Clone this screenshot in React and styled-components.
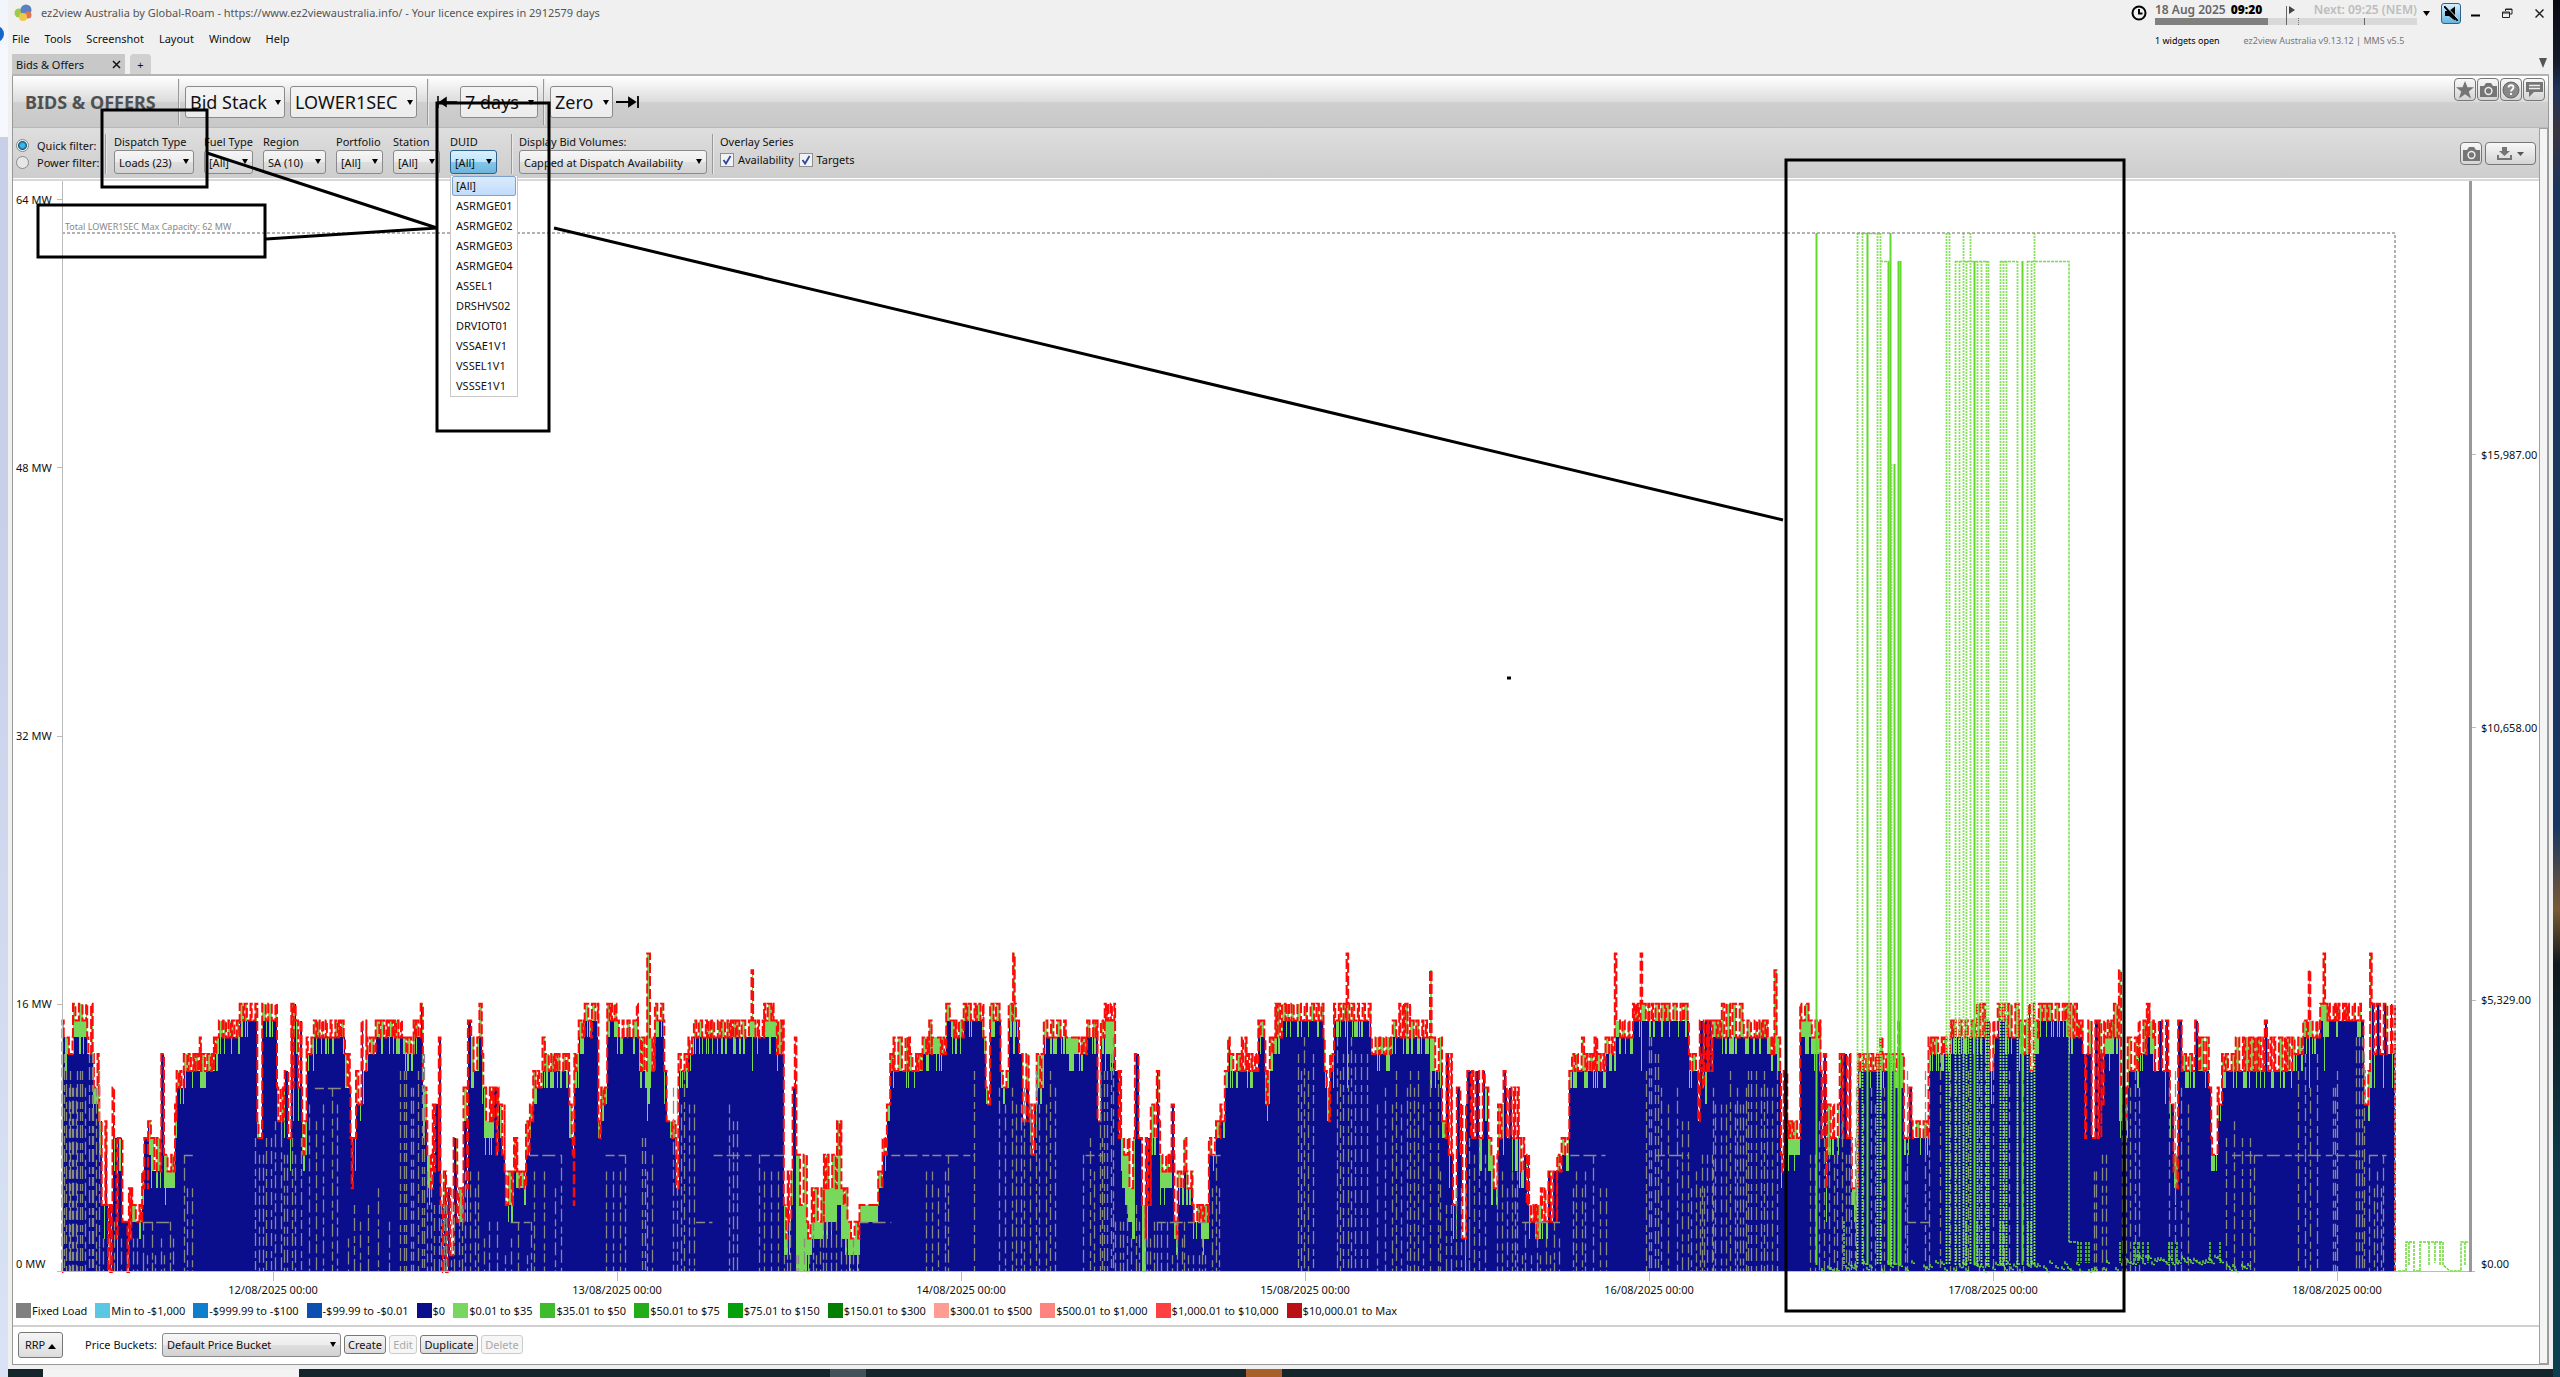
import React from "react";
import styled, { createGlobalStyle, css } from "styled-components";

const GlobalStyle = createGlobalStyle`
  * { box-sizing: border-box; }
  body { margin: 0; font-family: "Noto Sans", "Open Sans", sans-serif; font-size: 11px; color: #111; }
  button, select, input { font-family: inherit; font-size: inherit; color: inherit; margin: 0; }
`;

/* ---------- chart data ---------- */

const PLOT_W = 2409;
const PLOT_H = 1091;
const MW = 16.76;
const PX_PER_UNIT = 0.5485;
const yOf = (mw) => PLOT_H - mw * MW;

// Each run: [start, high MW, low MW, optional $0 level]
const blocks = [
  {
    from: 0,
    runs: [
      [115, 15, 14], [120, 14, 13], [134, 16, 15, 14], [160, 14, 13], [167, 16, 14], [170, 13, 11, 10], [182, 9, 4], [196, 4, 0],
      [206, 11, 8], [209, 8, 2], [222, 8, 3], [229, 3, 0], [236, 5, 2], [242, 4, 3], [260, 6, 5], [264, 8, 5], [271, 9, 6], [276, 8, 6],
      [295, 13, 6], [300, 7, 6, 5], [320, 10, 9], [323, 12, 11], [336, 13, 12], [365, 14, 12], [368, 13, 12], [391, 14, 13], [400, 15, 14],
      [438, 16, 15], [470, 9, 8], [479, 16, 15], [506, 11, 9], [520, 12, 8], [532, 16, 11], [540, 15, 11], [552, 9, 7], [560, 14, 13],
      [573, 15, 14], [630, 13, 11], [640, 8, 5], [650, 12, 10], [660, 15, 12], [669, 14, 13], [686, 15, 14], [735, 14, 13], [755, 15, 14],
      [768, 16, 13], [772, 11, 9], [780, 7, 5], [790, 10, 6], [801, 14, 4], [804, 4, 0], [810, 6, 0], [817, 5, 1], [828, 8, 3], [838, 5, 3],
      [846, 11, 5], [854, 15, 11], [860, 14, 12], [875, 16, 14], [880, 13, 11], [883, 11, 9, 8], [902, 11, 7], [910, 10, 7], [921, 6, 4],
      [938, 8, 6], [944, 6, 5], [960, 9, 7], [967, 10, 9], [973, 12, 11], [990, 14, 12], [995, 13, 12], [1039, 10, 8], [1045, 7, 4],
      [1048, 13, 12], [1056, 15, 14], [1067, 16, 15], [1074, 15, 14], [1080, 16, 15], [1092, 9, 8], [1097, 11, 10], [1108, 16, 15],
      [1125, 15, 14], [1162, 16, 14], [1165, 14, 12], [1181, 19, 19, 10], [1186, 14, 12], [1195, 16, 15], [1212, 12, 9], [1222, 9, 8],
      [1234, 5, 5], [1238, 13, 12], [1256, 14, 13], [1266, 15, 14], [1371, 18, 18, 12], [1374, 15, 14], [1394, 16, 15, 14], [1415, 15, 13],
      [1430, 4, 2, 1], [1437, 6, 3], [1446, 11, 6], [1450, 14, 11], [1453, 7, 4, 0], [1472, 3, 2, 1], [1481, 5, 3, 2], [1503, 7, 5, 3],
      [1527, 9, 7, 4], [1535, 5, 4, 2], [1546, 3, 2, 1],
    ],
  },
  {
    from: 1568,
    runs: [
      [0, 4, 4, 3], [34, 6, 5], [42, 8, 7], [50, 10, 9], [56, 13, 12], [62, 14, 12], [92, 13, 12], [115, 14, 13], [127, 15, 13],
      [132, 14, 14, 13], [146, 14, 13], [158, 16, 15], [166, 15, 14], [190, 16, 15], [226, 14, 13], [230, 11, 10], [238, 16, 15],
      [257, 12, 11], [272, 16, 15], [280, 19, 19, 13], [283, 16, 15], [291, 13, 9], [310, 10, 7], [323, 13, 11], [336, 15, 14],
      [376, 14, 14, 13], [398, 14, 13], [415, 15, 14], [434, 9, 9], [440, 15, 14], [447, 16, 15, 13], [466, 12, 8], [478, 8, 7, 5],
      [490, 8, 5, 3], [502, 13, 8], [515, 4, 2, 0], [522, 8, 4], [531, 10, 8], [542, 12, 9], [548, 7, 6, 5], [569, 10, 7], [574, 3, 2],
      [580, 6, 5], [592, 8, 6], [596, 6, 5], [607, 4, 3], [622, 4, 3, 2], [637, 8, 7], [650, 9, 8], [658, 10, 9], [666, 12, 11],
      [672, 14, 8], [675, 13, 12], [697, 14, 12], [708, 13, 12], [727, 15, 14], [740, 12, 10], [748, 14, 13], [758, 16, 14], [770, 16, 15],
      [846, 14, 12], [852, 11, 9], [858, 13, 12], [865, 16, 15], [888, 19, 19, 11], [891, 16, 15], [932, 14, 13], [972, 15, 14],
      [984, 16, 14], [1004, 15, 14], [1040, 18, 18, 11], [1043, 14, 12], [1062, 9, 8], [1070, 13, 7], [1080, 7, 4], [1089, 11, 7],
      [1097, 10, 2], [1108, 12, 8], [1140, 11, 8], [1152, 7, 5], [1164, 10, 8], [1174, 12, 9], [1178, 11, 8], [1202, 8, 6], [1212, 7, 4],
      [1222, 4, 3], [1232, 4, 2], [1242, 5, 3], [1256, 6, 3], [1272, 7, 6], [1280, 8, 7], [1294, 12, 11], [1299, 13, 12], [1317, 14, 12],
      [1321, 13, 12], [1340, 14, 12], [1345, 13, 12], [1360, 14, 13], [1377, 19, 19, 12], [1380, 15, 14], [1410, 16, 15],
      [1424, 19, 19, 12], [1427, 16, 15], [1512, 13, 12], [1529, 9, 9], [1532, 15, 12], [1548, 14, 13], [1556, 16, 14],
    ],
  },
  {
    from: 3100,
    runs: [
      [3, 12, 11], [8, 15, 12], [24, 15, 14], [40, 16, 14], [78, 15, 14], [124, 14, 13], [136, 18, 18, 13], [140, 14, 12], [148, 7, 6],
      [153, 12, 8], [160, 9, 8, 7], [183, 16, 15, 14], [202, 15, 14, 13], [220, 12, 8], [226, 13, 5], [232, 10, 8], [255, 13, 8],
      [277, 5, 5, 4], [288, 13, 12], [329, 14, 12], [333, 13, 12], [362, 15, 13], [366, 13, 8], [372, 8, 8], [382, 11, 8], [386, 9, 8],
      [417, 14, 13], [458, 15, 14], [505, 16, 14], [522, 15, 12], [535, 15, 14], [543, 16, 15], [556, 15, 14], [562, 16, 14],
      [582, 15, 13], [600, 16, 12], [610, 15, 14], [618, 16, 15], [668, 16, 14], [690, 15, 14], [698, 13, 8], [708, 15, 8],
      [732, 13, 10], [737, 15, 14, 13], [755, 16, 14], [764, 18, 18, 9], [768, 11, 9], [780, 14, 12], [800, 15, 13], [815, 16, 14],
      [820, 15, 14, 13], [828, 15, 12], [857, 10, 6], [864, 7, 5], [872, 15, 12], [880, 13, 12], [903, 15, 12], [908, 14, 12],
      [928, 11, 8], [934, 7, 7], [944, 11, 10], [952, 13, 12], [977, 14, 12], [1030, 15, 12], [1034, 14, 12], [1080, 14, 13],
      [1100, 15, 14], [1110, 18, 18, 11], [1113, 15, 14], [1131, 16, 15], [1137, 19, 19, 12], [1140, 16, 15], [1210, 12, 10],
      [1222, 19, 19, 12], [1225, 16, 13], [1267, 0, 0],
    ],
  },
];

// Target series: [start, end, spacing, level MW]
const targetRanges = [
  [118, 182, 4, 13], [182, 262, 9, 3], [262, 318, 7, 3], [336, 356, 6, 7], [465, 560, 7, 9], [565, 632, 13, 11], [636, 662, 7, 4],
  [672, 720, 15, 5], [730, 776, 6, 13], [780, 880, 6, 6], [884, 975, 12, 3], [975, 1030, 13, 7], [1105, 1142, 10, 7], [1172, 1190, 6, 8],
  [1228, 1272, 6, 12], [1330, 1345, 9, 11], [1385, 1430, 9, 7], [1430, 1570, 7, 3], [1690, 1732, 8, 7], [1776, 1778, 3, 13],
  [1822, 1930, 9, 12], [1975, 2012, 9, 8], [2006, 2034, 5, 14], [2034, 2110, 6, 4], [2110, 2200, 7, 3], [2210, 2235, 8, 7],
  [2368, 2398, 6, 14], [2438, 2500, 7, 14], [2512, 2626, 9, 12], [2626, 2680, 7, 6], [2680, 2716, 9, 8], [2730, 2776, 6, 7],
  [2776, 2850, 7, 3], [2868, 2930, 10, 7], [3002, 3024, 5, 14], [3030, 3084, 11, 11], [3084, 3124, 6, 7], [3124, 3245, 6, 12],
  [3300, 3385, 6, 9], [3385, 3480, 10, 12], [3474, 3478, 3, 7], [3510, 3700, 13, 14], [3818, 3842, 7, 7], [3870, 3902, 7, 12],
  [3955, 3995, 9, 12], [4060, 4112, 11, 9], [4190, 4235, 11, 13], [4254, 4262, 3, 12], [4296, 4316, 5, 14], [4320, 4350, 6, 7],
];

// Flat stretches of the target series: [start, end, level MW]
const targetFlats = [
  [262, 310, 3], [336, 356, 7], [932, 968, 3], [966, 1024, 7], [1105, 1140, 7], [1270, 1300, 3], [1302, 1376, 7], [1388, 1430, 7],
  [1568, 1626, 3], [1626, 1778, 7], [1980, 2012, 7], [2110, 2200, 3], [2210, 2232, 7], [2776, 2850, 3], [2864, 2928, 7], [3020, 3080, 7],
  [3478, 3518, 3], [4070, 4108, 7], [4110, 4300, 7], [4320, 4352, 7], [575, 628, 11],
];

// Regional price spikes: [x, y of top, solid]
const priceSpikes = [
  [1754, 52, 1], [1795, 52, 0], [1800, 52, 0], [1805, 52, 1], [1815, 52, 0], [1818, 52, 0], [1826, 80, 1], [1828, 52, 1], [1829, 283, 0],
  [1832, 283, 1], [1836, 80, 1], [1838, 80, 1], [1884, 52, 0], [1887, 52, 0], [1893, 80, 0], [1897, 80, 0], [1904, 80, 0], [1901, 52, 0],
  [1908, 52, 0], [1912, 80, 1], [1915, 80, 0], [1919, 80, 0], [1924, 80, 0], [1926, 80, 0], [1938, 80, 0], [1941, 80, 0], [1944, 80, 0],
  [1955, 80, 0], [1960, 80, 1], [1965, 80, 0], [1969, 80, 0], [1972, 52, 0],
];

function makeRandom(seed) {
  let s = seed;
  return () => {
    s = (s * 1664525 + 1013904223) % 4294967296;
    return s / 4294967296;
  };
}

function buildSeries() {
  const rnd = makeRandom(2025);
  const runs = blocks.flatMap((b) => b.runs.map((r) => [r[0] + b.from, r[1], r[2], r[3]]));
  let avail = `M0 ${PLOT_H}`;
  let green = `M0 ${PLOT_H}`;
  let blue = `M0 ${PLOT_H}`;
  for (let i = 0; i < runs.length - 1; i += 1) {
    const [start, hi, lo, zero] = runs[i];
    const end = runs[i + 1][0];
    let high = true;
    let hold = 0;
    for (let u = start; u < end; u += 2.18) {
      if (hold <= 0) {
        high = u === start ? true : !high;
        hold = 1 + Math.floor(rnd() * 3);
      }
      hold -= 1;
      const x = ((u - 114) * PX_PER_UNIT).toFixed(1);
      const level = high ? hi : lo;
      const stripe = rnd() < 0.32 ? 1 : 0;
      let base;
      if (zero !== undefined) base = zero - (rnd() < 0.25 ? 1 : 0);
      else if (hi - lo <= 2) base = lo - stripe;
      else base = level - stripe * 2;
      avail += `H${x}V${yOf(level).toFixed(1)}`;
      green += `H${x}V${yOf(level).toFixed(1)}`;
      blue += `H${x}V${yOf(Math.max(0, Math.min(base, level))).toFixed(1)}`;
    }
  }
  const endX = 2333;
  const close = `H${endX}V${PLOT_H}Z`;
  return { avail: `${avail}H${endX}V${PLOT_H}`, green: green + close, blue: blue + close };
}

function buildTargets() {
  const rnd = makeRandom(77);
  let d = "";
  targetRanges.forEach(([a, b, gap, level]) => {
    for (let u = a; u < b; u += gap * (0.6 + rnd())) {
      const x = Math.round((u - 114) * PX_PER_UNIT) + 0.5;
      const top = level - Math.floor(rnd() * 3);
      d += `M${x} ${yOf(Math.max(1, top))}V${PLOT_H}`;
    }
  });
  targetFlats.forEach(([a, b, level]) => {
    d += `M${((a - 114) * PX_PER_UNIT).toFixed(1)} ${Math.round(yOf(level)) + 0.5}H${((b - 114) * PX_PER_UNIT).toFixed(1)}`;
  });
  return d;
}

function buildLowPrice() {
  const rnd = makeRandom(9);
  let d = "M2007 1061H2016";
  for (let x = 1760; x < 2188; x += 3) {
    const dense = x > 2060 && x < 2160;
    if (dense || rnd() < 0.6) {
      const h = dense ? 10 + rnd() * 8 : 3 + rnd() * 9;
      d += `M${x} ${(PLOT_H - h).toFixed(1)}v3h3`;
    }
  }
  [2016, 2019, 2024, 2027, 2058, 2072, 2076, 2081, 2086, 2107, 2110, 2115, 2148, 2158].forEach((x) => {
    d += `M${x} 1061V1082`;
  });
  [1782, 1904, 1915, 1938, 1941, 1966, 1969].forEach((x) => {
    d += `M${x} 1040V1085`;
  });
  d += "M2336 1090H2344V1061H2352V1090H2358V1061H2381V1084L2388 1090H2399V1061H2407";
  d += "M2347 1061V1084M2367 1061V1084M2373 1061V1082M2378 1061V1084M2403 1061V1084";
  return d;
}

const series = buildSeries();
const targets = buildTargets();
const lowPrice = buildLowPrice();

/* ---------- layout ---------- */

const Screen = styled.div`
  display: grid;
  grid-template-columns: 8px minmax(0, 1fr) 7px;
  grid-template-rows: minmax(0, 1fr) 8px;
  grid-template-areas: "left window right" "left taskbar right";
  height: 100vh;
  overflow: hidden;
  position: relative;
  background: #16242b;
`;

const LeftDesktop = styled.div`
  grid-area: left;
  background: linear-gradient(#f2f5fb 0 45px, #f6f8fd 45px 137px, #c8d0e8 137px 500px, #d9e3f5);
  overflow: hidden;
`;

const BlueDot = styled.div`
  width: 16px;
  height: 16px;
  margin: 26px 0 0 -12px;
  border-radius: 50%;
  background: #1467c4;
`;

const RightDesktop = styled.div`
  grid-area: right;
  background: linear-gradient(#0a0c12, #141a28 60px, #22345a 90px, #3b3440 130px, #1b355e 190px, #173663 60%, #7b5a36 66%, #10181c 70%, #0d3c4a 85%, #0d4150);
`;

const Taskbar = styled.div`
  grid-area: taskbar;
  display: flex;
  background: #15252c;
`;

const TaskSlot = styled.div`
  width: ${(p) => p.$w}px;
  background: ${(p) => p.$color};
`;

const Window = styled.main`
  grid-area: window;
  display: flex;
  flex-direction: column;
  background: #f0f0f0;
  min-width: 0;
  min-height: 0;
  padding: 0 4px 4px 4px;
`;

const Header = styled.header`
  display: flex;
  justify-content: space-between;
  height: 52px;
`;

const HeaderLeft = styled.div`
  display: flex;
  flex-direction: column;
`;

const TitleLine = styled.div`
  display: flex;
  align-items: center;
  gap: 8px;
  height: 26px;
  padding-left: 2px;
  color: #555;
`;

const MenuBar = styled.nav`
  display: flex;
  align-items: center;
  gap: 15px;
  height: 28px;
`;

const MenuButton = styled.button`
  border: 0;
  padding: 0;
  background: none;
`;

const HeaderRight = styled.div`
  display: flex;
`;

const ClockBlock = styled.div`
  display: grid;
  grid-template-columns: 18px 262px 18px;
  column-gap: 6px;
  grid-template-rows: 26px 28px;
  align-items: center;
`;

const ClockLine = styled.div`
  display: flex;
  flex-direction: column;
`;

const ClockText = styled.div`
  display: flex;
  justify-content: space-between;
  align-items: flex-end;
  height: 17px;
  line-height: 16px;
  font-size: 12px;
  font-weight: 600;
  color: #666;
  b { color: #000; margin-left: 2px; }
`;

const NextText = styled.span`
  color: #bdbdbd;
`;

const VersionLine = styled.div`
  grid-column: 2;
  display: flex;
  gap: 24px;
  font-size: 9px;
  color: #777;
  white-space: nowrap;
  span:first-child { color: #000; }
`;

const WindowButtons = styled.div`
  display: flex;
  align-items: center;
  height: 26px;
  gap: 9px;
  margin-right: -2px;
`;

const MuteButton = styled.button`
  display: flex;
  width: 20px;
  height: 21px;
  margin-right: -6px;
  padding: 2px;
  border: 1px solid #2c628b;
  border-radius: 3px;
  background: linear-gradient(#d5effc, #69b5e0);
`;

const PlainButton = styled.button`
  display: flex;
  align-items: center;
  justify-content: center;
  width: 23px;
  height: 20px;
  border: 0;
  padding: 0;
  background: none;
`;

const TabStrip = styled.div`
  display: flex;
  align-items: flex-end;
  height: 24px;
  gap: 5px;
  padding-right: 2px;
  border-bottom: 2px solid #b4b4b4;
`;

const Tab = styled.div`
  display: flex;
  align-items: center;
  justify-content: space-between;
  width: 113px;
  height: 20px;
  padding: 0 4px;
  background: #c8c8c8;
`;

const AddTab = styled.button`
  width: 21px;
  height: 20px;
  border: 0;
  padding: 0;
  background: #d0d0d0;
  border-radius: 4px 4px 0 0;
`;

const TabList = styled.div`
  margin-left: auto;
  align-self: center;
  display: flex;
`;

const Panel = styled.section`
  flex: 1;
  min-height: 0;
  display: flex;
  flex-direction: column;
  border: 1px solid #999;
  border-top: 0;
  background: #fff;
`;

const Toolbar = styled.div`
  display: flex;
  align-items: center;
  height: 52px;
  padding-left: 12px;
  background: linear-gradient(#fff, #dcdcdc 50%, #cfcfcf 52%, #c8c8c8);
  border-bottom: 1px solid #b8b8b8;
`;

const Heading = styled.h1`
  margin: 0;
  width: 153px;
  font-size: 18px;
  font-weight: 700;
  line-height: 24px;
  color: #505050;
  white-space: nowrap;
`;

const Separator = styled.div`
  width: 2px;
  height: ${(p) => p.$h}px;
  background: #999;
  border-right: 1px solid #e8e8e8;
`;

const ToolGroup = styled.div`
  display: flex;
  align-items: center;
  gap: ${(p) => p.$gap || 5}px;
  padding: 0 ${(p) => p.$right || 10}px 0 ${(p) => p.$left || 5}px;
`;

const IconRow = styled.div`
  display: flex;
  gap: 1px;
  margin: 0 3px 24px auto;
`;

const IconButton = styled.button`
  display: flex;
  align-items: center;
  justify-content: center;
  gap: 5px;
  width: ${(p) => p.$w || 22}px;
  height: 23px;
  padding: 0;
  border: 1px solid #777;
  border-radius: 4px;
  background: linear-gradient(#f8f8f8, #d4d4d4);
  color: #757575;
`;

const SelectShell = styled.div`
  position: relative;
  width: ${(p) => p.$w}px;
  height: ${(p) => (p.$large ? 32 : 24)}px;
  &::after {
    content: "";
    position: absolute;
    right: ${(p) => (p.$large ? 4 : 5)}px;
    top: ${(p) => (p.$large ? 14 : 9)}px;
    border: 3px solid transparent;
    border-top: 5px solid #000;
    border-bottom: 0;
    pointer-events: none;
  }
`;

const NativeSelect = styled.select`
  appearance: none;
  width: 100%;
  height: 100%;
  padding: 0 4px;
  border: 1px solid #8a8a8a;
  border-radius: 3px;
  background: linear-gradient(#f6f6f6, #ececec 50%, #dedede 52%, #d2d2d2);
  font-size: ${(p) => (p.$large ? 18 : 11)}px;
  ${(p) => p.$large && css`background: linear-gradient(#f4f4f4, #ececec);`}
  ${(p) => p.$active && css`
    border-color: #2c628b;
    background: linear-gradient(#d9f0fc, #bee6fd 50%, #85c6ea 52%, #6db5dd);
  `}
`;

const Filters = styled.div`
  display: flex;
  align-items: flex-start;
  height: 50px;
  padding: 6px 10px 0 3px;
  background: linear-gradient(#dedede, #cdcdcd);
`;

const ScrollBody = styled.div`
  flex: 1;
  min-height: 0;
  display: flex;
`;

const Content = styled.div`
  flex: 1;
  min-width: 0;
  display: flex;
  flex-direction: column;
`;

const ScrollTrack = styled.div`
  width: 9px;
  border: 1px solid #a0a0a0;
  background: #f4f4f4;
`;

const RadioList = styled.div`
  display: flex;
  flex-direction: column;
  gap: 1px;
  width: 89px;
  padding-top: 3px;
`;

const RadioLabel = styled.label`
  display: flex;
  align-items: center;
  gap: 8px;
  height: 16px;
  white-space: nowrap;
  input {
    appearance: none;
    width: 13px;
    height: 13px;
    border: 1px solid #8a8a8a;
    border-radius: 50%;
    background: #e6e6e6;
  }
  input:checked { background: radial-gradient(#3fb5e8 0 2px, #125a86 4px, #f0f0f0 5px); }
`;

const Field = styled.div`
  position: relative;
  display: flex;
  flex-direction: column;
  width: ${(p) => p.$w}px;
  label { height: 16px; line-height: 16px; white-space: nowrap; }
`;

const FilterGroup = styled.div`
  display: flex;
  gap: 10px;
  padding: 0 ${(p) => p.$right || 5}px 0 ${(p) => p.$left || 6}px;
`;

const DropMenu = styled.ul`
  position: absolute;
  z-index: 3;
  top: 41px;
  left: 0;
  width: 68px;
  margin: 0;
  padding: 0 1px;
  list-style: none;
  border: 1px solid #c8c8c8;
  background: #fff;
`;

const DropItem = styled.li`
  height: 20px;
  line-height: 18px;
  padding: 0 3px;
  border: 1px solid ${(p) => (p.$selected ? "#7da2ce" : "transparent")};
  border-radius: 2px;
  background: ${(p) => (p.$selected ? "linear-gradient(#dcebfd, #c1dbfc)" : "none")};
`;

const CheckLine = styled.div`
  display: flex;
  align-items: center;
  gap: 5px;
  height: 22px;
  label { display: flex; align-items: center; gap: 4px; }
`;

const CheckShell = styled.span`
  display: inline-grid;
  width: 14px;
  height: 14px;
  input, svg { grid-area: 1 / 1; }
  input {
    appearance: none;
    width: 14px;
    height: 14px;
    border: 1px solid #8e8f8f;
    background: #f0f2f4;
  }
  svg { pointer-events: none; z-index: 1; }
`;

const ChartTools = styled.div`
  display: flex;
  gap: 3px;
  margin: 8px -7px 0 auto;
`;

const ChartGrid = styled.div`
  flex: 1;
  min-height: 0;
  display: grid;
  grid-template-columns: 49px minmax(0, 1fr) 68px;
  grid-template-rows: minmax(0, 1fr);
  margin-top: 1px;
  border-top: 2px solid #d8d8d8;
`;

const Axis = styled.div`
  display: grid;
  grid-template-rows: ${(p) => p.$rows};
  padding-left: ${(p) => p.$pad}px;
  white-space: nowrap;
  span { align-self: end; line-height: 16px; margin-bottom: -9px; }
  span:last-child { margin-bottom: 0; }
`;

const Plot = styled.svg`
  display: block;
  width: 100%;
  height: 100%;
  min-height: 0;
  overflow: visible;
`;

const CapacityLabel = styled.text`
  font-size: 9px;
  fill: #888;
`;

const DateAxis = styled.div`
  display: grid;
  grid-template-columns: 40fr repeat(7, 344fr);
  height: 29px;
  margin: 0 30px 0 48px;
  text-align: center;
  span:first-child { grid-column: 2; }
  span { padding-top: 10px; line-height: 16px; }
`;

const Legend = styled.div`
  display: flex;
  align-items: center;
  gap: 8px;
  height: 26px;
  padding: 0 0 5px 3px;
  border-bottom: 2px solid #d0d0d0;
  white-space: nowrap;
`;

const LegendItem = styled.span`
  display: flex;
  align-items: center;
  gap: 1px;
`;

const Swatch = styled.i`
  width: 15px;
  height: 15px;
  background: ${(p) => p.$color};
`;

const Footer = styled.footer`
  display: flex;
  align-items: center;
  gap: 3px;
  height: 37px;
  padding: 0 0 2px 5px;
`;

const Button = styled.button`
  width: ${(p) => p.$w}px;
  height: ${(p) => p.$h || 19}px;
  margin-right: ${(p) => p.$after || 0}px;
  padding: 0;
  border: 1px solid #777;
  border-radius: 3px;
  background: linear-gradient(#f5f5f5, #dcdcdc);
  white-space: nowrap;
  &:disabled { color: #aaa; border-color: #ccc; background: #f6f6f6; }
`;

const FooterLabel = styled.label`
  width: 74px;
  white-space: nowrap;
`;

const Markup = styled.svg`
  position: absolute;
  inset: 0;
  width: 100%;
  height: 100%;
  z-index: 5;
  pointer-events: none;
`;

/* ---------- parts ---------- */

function Choice({ id, value, w, large, active, label }) {
  return (
    <SelectShell $w={w} $large={large}>
      <NativeSelect id={id} aria-label={label} $large={large} $active={active} defaultValue={value}>
        <option>{value}</option>
      </NativeSelect>
    </SelectShell>
  );
}

function FilterField({ label, value, w, active, children }) {
  const id = label.toLowerCase().replace(/[^a-z]+/g, "-");
  return (
    <Field $w={w}>
      <label htmlFor={id}>{label}</label>
      <Choice id={id} value={value} w={w} active={active} />
      {children}
    </Field>
  );
}

function CameraIcon() {
  return (
    <svg width="17" height="14" viewBox="0 0 17 14">
      <path d="M0 3h4l2-3h5l2 3h4v11H0z" fill="#757575" />
      <circle cx="8.500" cy="8" r="3.400" fill="none" stroke="#eee" strokeWidth="1.500" />
    </svg>
  );
}

function CheckBox({ label }) {
  return (
    <label>
      <CheckShell>
        <input type="checkbox" defaultChecked />
        <svg viewBox="0 0 14 14"><path d="M3.500 7l2.500 3.500L10.500 3" fill="none" stroke="#31479b" strokeWidth="1.800" /></svg>
      </CheckShell>
      {label}
    </label>
  );
}

const duids = ["[All]", "ASRMGE01", "ASRMGE02", "ASRMGE03", "ASRMGE04", "ASSEL1", "DRSHVS02", "DRVIOT01", "VSSAE1V1", "VSSEL1V1", "VSSSE1V1"];

const legend = [
  ["Fixed Load", "#808080"], ["Min to -$1,000", "#5bc8e3"], ["-$999.99 to -$100", "#0f7fcd"], ["-$99.99 to -$0.01", "#0d4fb0"],
  ["$0", "#0a0e8c"], ["$0.01 to $35", "#78d760"], ["$35.01 to $50", "#3fbb2e"], ["$50.01 to $75", "#22ad1a"], ["$75.01 to $150", "#06a00a"],
  ["$150.01 to $300", "#038003"], ["$300.01 to $500", "#ff9c94"], ["$500.01 to $1,000", "#ff8480"], ["$1,000.01 to $10,000", "#ff4040"],
  ["$10,000.01 to Max", "#bb1014"],
];

const dates = ["12", "13", "14", "15", "16", "17", "18"];

function Chart() {
  return (
    <Plot viewBox={`0 0 ${PLOT_W} ${PLOT_H}`} preserveAspectRatio="none">
      <path d={series.green} fill="#78d85c" shapeRendering="crispEdges" />
      <path d={series.blue} fill="#0a0e8c" shapeRendering="crispEdges" />
      <path d={series.avail} fill="none" stroke="#ff0a0a" strokeWidth="2" strokeDasharray="10 3" />
      <path d={targets} fill="none" stroke="#8a8a84" strokeWidth="1.300" strokeDasharray="9 4 13 5 7 3" />
      <path d={lowPrice} fill="none" stroke="#69d936" strokeWidth="1.500" strokeDasharray="3 1" />
      {priceSpikes.map(([x, top, solid]) => (
        <path
          key={x}
          d={`M${x + 0.5} ${top}V1084`}
          stroke={solid ? "#62d82c" : "#86e25a"}
          strokeWidth={solid ? 2 : 1.8}
          strokeDasharray={solid ? "none" : "2 1"}
        />
      ))}
      <path d="M1795 52.500H1818M1818 80.500H1827M1893 80.500H1926M1938 80.500H1955M1965 80.500H2007V1061" fill="none" stroke="#7ddc4e" strokeWidth="1.500" strokeDasharray="3 1" />
      <path d="M0 52H2333V1091" fill="none" stroke="#999" strokeWidth="1.500" strokeDasharray="3 2" />
      <path d="M0.500 0V1091M-5 18.500H0M-5 286.500H0M-5 555.500H0M-5 823.500H0M-5 1090.500H2413M2409 273.500h5M2409 546.500h5M2409 819.500h5" stroke="#bbb" fill="none" />
      <path d="M211.500 1091v9M555.500 1091v9M899.500 1091v9M1243.500 1091v9M1587.500 1091v9M1931.500 1091v9M2275.500 1091v9" stroke="#bbb" fill="none" />
      <path d="M2408.500 0V1091" stroke="#999" strokeWidth="3" />
      <CapacityLabel x="3" y="49">Total LOWER1SEC Max Capacity: 62 MW</CapacityLabel>
    </Plot>
  );
}

export default function App() {
  return (
    <Screen>
      <GlobalStyle />
      <LeftDesktop><BlueDot /></LeftDesktop>
      <Window>
        <Header>
          <HeaderLeft>
            <TitleLine>
              <svg width="19" height="18" viewBox="0 0 19 18">
                <circle cx="5" cy="9" r="4.500" fill="#9ccb4c" />
                <circle cx="12" cy="6" r="5.500" fill="#5b80c4" />
                <circle cx="14" cy="11" r="3.500" fill="#e4744f" />
                <circle cx="9" cy="13" r="4" fill="#eec84a" />
              </svg>
              <span>ez2view Australia by Global-Roam - https://www.ez2viewaustralia.info/ - Your licence expires in 2912579 days</span>
            </TitleLine>
            <MenuBar>
              {["File", "Tools", "Screenshot", "Layout", "Window", "Help"].map((m) => <MenuButton key={m}>{m}</MenuButton>)}
            </MenuBar>
          </HeaderLeft>
          <HeaderRight>
            <ClockBlock>
              <svg width="16" height="16" viewBox="0 0 16 16" fill="none" stroke="#000" strokeWidth="2">
                <circle cx="8" cy="8" r="6.500" /><path d="M8 4v4.500h3.500" />
              </svg>
              <ClockLine>
                <ClockText>
                  <span>18 Aug 2025 <b>09:20</b></span>
                  <NextText>Next: 09:25 (NEM)</NextText>
                </ClockText>
                <svg width="262" height="7" viewBox="0 0 262 7" overflow="visible">
                  <path d="M0 0h262v7H0z" fill="#d9d9d9" /><path d="M0 0h113v7H0z" fill="#808080" />
                  <path d="M131.500 -12V7M209.500 0v7" stroke="#666" /><path d="M143.500 0v7" stroke="#777" strokeDasharray="1 1" />
                  <path d="M134 -12l6 4-6 4z" fill="#444" />
                </svg>
              </ClockLine>
              <svg width="7" height="5" viewBox="0 0 7 5"><path d="M0 0h7L3.500 5z" /></svg>
              <VersionLine><span>1 widgets open</span><span>ez2view Australia v9.13.12 | MMS v5.5</span></VersionLine>
            </ClockBlock>
            <WindowButtons>
              <MuteButton aria-label="Mute">
                <svg width="14" height="15" viewBox="0 0 14 15"><path d="M1 5h4l6-4.500v14L5 10H1z" /><path d="M0 0l14 15" stroke="#000" strokeWidth="2" /><path d="M1 -1l14 15" stroke="#bfe3f6" /></svg>
              </MuteButton>
              <PlainButton aria-label="Minimise"><svg width="9" height="8"><path d="M0 6.500h9" stroke="#000" strokeWidth="2" /></svg></PlainButton>
              <PlainButton aria-label="Restore">
                <svg width="11" height="10" fill="none" stroke="#222"><path d="M3.500 3V1H10v5H8M.500 4H7.500v5.500H.500zM3 1.500h7M.500 5h7" /></svg>
              </PlainButton>
              <PlainButton aria-label="Close"><svg width="9" height="9"><path d="M.500 .500l8 8M8.500 .500l-8 8" stroke="#222" strokeWidth="1.500" /></svg></PlainButton>
            </WindowButtons>
          </HeaderRight>
        </Header>
        <TabStrip>
          <Tab>
            Bids &amp; Offers
            <MenuButton aria-label="Close tab"><svg width="9" height="9"><path d="M1 1l7 7M8 1L1 8" stroke="#111" strokeWidth="1.500" /></svg></MenuButton>
          </Tab>
          <AddTab>+</AddTab>
          <TabList><svg width="8" height="10"><path d="M0 0h8L4 10z" fill="#555" /></svg></TabList>
        </TabStrip>
        <Panel>
          <Toolbar>
            <Heading>BIDS &amp; OFFERS</Heading>
            <Separator $h={46} />
            <ToolGroup>
              <Choice label="View" value="Bid Stack" w={100} large />
              <Choice label="Market" value="LOWER1SEC" w={127} large />
            </ToolGroup>
            <Separator $h={46} />
            <ToolGroup $left={8} $right={5} $gap={3}>
              <svg width="20" height="12"><path d="M1 0v12M2 6h18M3 6l6-4v8z" stroke="#000" strokeWidth="1.500" /></svg>
              <Choice label="Range" value="7 days" w={78} large />
            </ToolGroup>
            <Separator $h={46} />
            <ToolGroup $gap={3}>
              <Choice label="Offset" value="Zero" w={63} large />
              <svg width="23" height="14"><path d="M22 1v12M0 7h18M19 7l-6-4v8z" stroke="#000" strokeWidth="1.800" /></svg>
            </ToolGroup>
            <IconRow>
              <IconButton aria-label="Favourite"><svg width="18" height="18" viewBox="0 0 18 18"><path d="M9 0l2.500 6.300H18l-5.200 4.200L15 17.500l-6-4.200-6 4.200 2.200-7L0 6.300h6.500z" fill="#757575" /></svg></IconButton>
              <IconButton aria-label="Snapshot"><CameraIcon /></IconButton>
              <IconButton aria-label="Help">
                <svg width="18" height="18" viewBox="0 0 18 18"><circle cx="9" cy="9" r="8" fill="#888" stroke="#666" /><path d="M6.500 6.500c.300-3 5-3 5 0 0 2-2.500 2-2.500 4M9 12v2" fill="none" stroke="#fff" strokeWidth="1.800" /></svg>
              </IconButton>
              <IconButton aria-label="Comment">
                <svg width="17" height="15" viewBox="0 0 17 15"><path d="M0 0h17v10H8l-5 5v-5H0z" fill="#757575" /><path d="M3 3.500h11M3 6.500h11" stroke="#eee" strokeWidth="1.500" /></svg>
              </IconButton>
            </IconRow>
          </Toolbar>
          <ScrollBody>
            <Content>
              <Filters>
                <RadioList>
                  <RadioLabel><input type="radio" name="filter" defaultChecked />Quick filter:</RadioLabel>
                  <RadioLabel><input type="radio" name="filter" />Power filter:</RadioLabel>
                </RadioList>
                <Separator $h={40} />
                <FilterGroup $left={7} $right={14}>
                  <FilterField label="Dispatch Type" value="Loads (23)" w={80} />
                  <FilterField label="Fuel Type" value="[All]" w={49} />
                  <FilterField label="Region" value="SA (10)" w={63} />
                  <FilterField label="Portfolio" value="[All]" w={47} />
                  <FilterField label="Station" value="[All]" w={47} />
                  <FilterField label="DUID" value="[All]" w={47} active>
                    <DropMenu>
                      {duids.map((d, i) => <DropItem key={d} $selected={i === 0}>{d}</DropItem>)}
                    </DropMenu>
                  </FilterField>
                </FilterGroup>
                <Separator $h={40} />
                <FilterGroup>
                  <FilterField label="Display Bid Volumes:" value="Capped at Dispatch Availability" w={188} />
                </FilterGroup>
                <Separator $h={40} />
                <FilterGroup>
                  <Field $w={150}>
                    <span>Overlay Series</span>
                    <CheckLine><CheckBox label="Availability" /><CheckBox label="Targets" /></CheckLine>
                  </Field>
                </FilterGroup>
                <ChartTools>
                  <IconButton aria-label="Chart snapshot"><CameraIcon /></IconButton>
                  <IconButton $w={51} aria-label="Download">
                    <svg width="15" height="13" viewBox="0 0 15 13" fill="#757575"><path d="M5 0h5v4h3L7.500 9 2 4h3zM0 8h2v3h11V8h2v5H0z" /></svg>
                    <svg width="7" height="4"><path d="M0 0h7L3.500 4z" fill="#555" /></svg>
                  </IconButton>
                </ChartTools>
              </Filters>
              <ChartGrid>
                <Axis $rows="18fr 268fr 268fr 268fr 269fr" $pad={3}>
                  <span>64 MW</span><span>48 MW</span><span>32 MW</span><span>16 MW</span><span>0 MW</span>
                </Axis>
                <Chart />
                <Axis $rows="repeat(4, 1fr)" $pad={10}>
                  <span>$15,987.00</span><span>$10,658.00</span><span>$5,329.00</span><span>$0.00</span>
                </Axis>
              </ChartGrid>
              <DateAxis>
                {dates.map((d) => <span key={d}>{d}/08/2025 00:00</span>)}
              </DateAxis>
              <Legend>
                {legend.map(([text, color]) => <LegendItem key={text}><Swatch $color={color} />{text}</LegendItem>)}
              </Legend>
              <Footer>
                <Button $w={45} $h={26} $after={19}>RRP <svg width="8" height="5"><path d="M0 5h8L4 0z" /></svg></Button>
                <FooterLabel htmlFor="bucket">Price Buckets:</FooterLabel>
                <Choice id="bucket" value="Default Price Bucket" w={179} />
                <Button $w={42}>Create</Button>
                <Button $w={28} disabled>Edit</Button>
                <Button $w={58}>Duplicate</Button>
                <Button $w={42} disabled>Delete</Button>
              </Footer>
            </Content>
            <ScrollTrack />
          </ScrollBody>
        </Panel>
      </Window>
      <RightDesktop />
      <Taskbar>
        <TaskSlot $w={35} />
        <TaskSlot $w={256} $color="#f3f3f3" />
        <TaskSlot $w={531} />
        <TaskSlot $w={36} $color="#42525a" />
        <TaskSlot $w={380} />
        <TaskSlot $w={36} $color="#a8602a" />
      </Taskbar>
      <Markup fill="none" stroke="#000" strokeWidth="3">
        <rect x="102" y="110" width="105" height="77" />
        <rect x="38" y="205" width="227" height="52" />
        <rect x="437" y="103" width="112" height="328" />
        <rect x="1786" y="160" width="338" height="1151" />
        <path d="M207 153L437 228M266 239L437 228M554 228L1783 520" />
        <path d="M1507 678h4" />
      </Markup>
    </Screen>
  );
}
